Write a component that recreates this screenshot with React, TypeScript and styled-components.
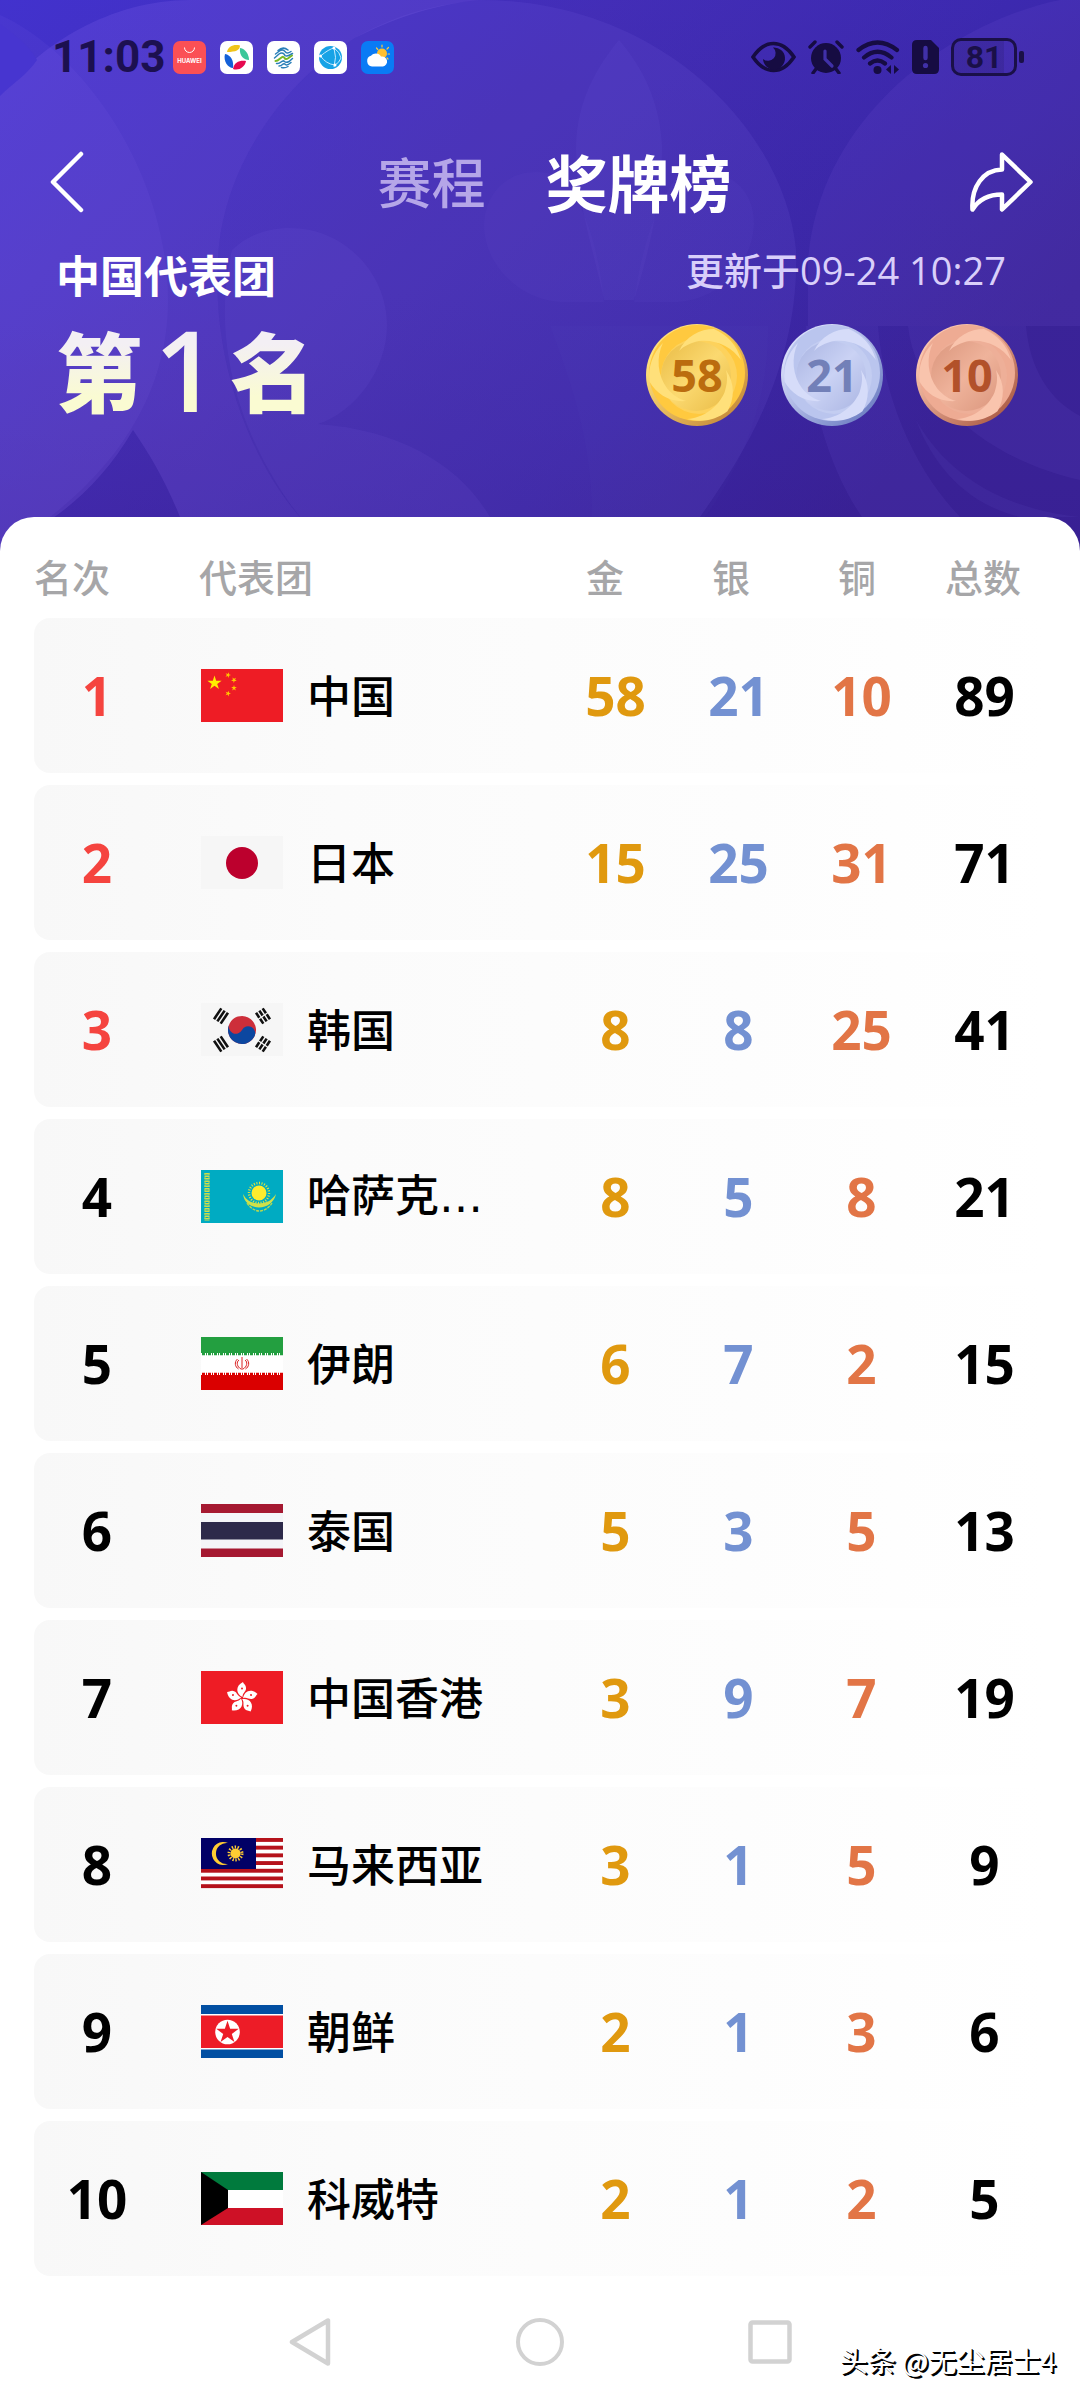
import React from "react";
import styled, { createGlobalStyle } from "styled-components";

const DIGITS = `"Open Sans", "Noto Sans CJK SC", sans-serif`;

const GlobalStyle = createGlobalStyle`
  *, *::before, *::after { box-sizing: border-box; }
  body {
    margin: 0;
    background: #fff;
    font-family: "Noto Sans CJK SC", "Noto Sans", sans-serif;
    color: #000;
  }
  button {
    border: 0;
    padding: 0;
    background: none;
    font: inherit;
    color: inherit;
    cursor: pointer;
  }
  svg { display: block; }
`;

const Page = styled.div`
  position: relative;
  min-height: 100vh;
  display: flex;
  flex-direction: column;
`;

const Backdrop = styled.svg`
  position: absolute;
  inset: 0 0 auto 0;
  width: 100%;
  height: 560px;
  z-index: -1;
`;

/* ---------- status bar ---------- */

const StatusBar = styled.div`
  display: flex;
  align-items: center;
  justify-content: space-between;
  height: 78px;
  padding: 36px 63px 0 52px;
  color: #1c1050;
`;

const StatusGroup = styled.div<{ $gap: number }>`
  display: flex;
  align-items: center;
  gap: ${(p) => p.$gap}px;
`;

const Clock = styled.span`
  font-family: Roboto, sans-serif;
  font-size: 44px;
  line-height: 42px;
  font-weight: 700;
`;

const Battery = styled.span`
  position: relative;
  display: flex;
  align-items: center;
  justify-content: center;
  width: 66px;
  height: 38px;
  border: 3px solid #1a1048;
  border-radius: 10px;
  background: linear-gradient(90deg, rgba(26, 16, 72, 0.16) 84%, transparent 84%);
  color: #1a1048;
  font-family: Roboto, sans-serif;
  font-size: 32px;
  line-height: 32px;
  font-weight: 700;

  &::after {
    content: "";
    position: absolute;
    right: -10px;
    top: 10px;
    width: 5px;
    height: 12px;
    border-radius: 2px;
    background: #1a1048;
  }
`;

/* ---------- header ---------- */

const TopBar = styled.header`
  display: flex;
  align-items: center;
  height: 104px;
  margin-top: 52px;
  padding: 0 46px 0 50px;
  color: #fff;
`;

const BackButton = styled.button`
  width: 90px;
`;

const Tabs = styled.nav`
  flex: 1;
  display: flex;
  align-items: center;
  justify-content: center;
  gap: 60px;
  padding-bottom: 3px;
`;

const Tab = styled.button<{ $active?: boolean }>`
  font-size: ${(p) => (p.$active ? 62 : 54)}px;
  line-height: 80px;
  font-weight: ${(p) => (p.$active ? 700 : 500)};
  color: ${(p) => (p.$active ? "#fff" : "#b5a6e8")};
`;

const Summary = styled.section`
  display: flex;
  justify-content: space-between;
  padding: 8px 62px 85px 56px;
  color: #fff;
`;

const TeamTitle = styled.h1`
  margin: 0;
  font-size: 44px;
  line-height: 64px;
  font-weight: 700;
`;

const Standing = styled.p`
  display: flex;
  align-items: center;
  gap: 12px;
  margin: 0;
  font-size: 86px;
  line-height: 126px;
  font-weight: 900;

  span {
    background: linear-gradient(180deg, #f3eff4 30%, #fafbd2 72%);
    background-clip: text;
    -webkit-background-clip: text;
    color: transparent;
  }
`;

const StandingNumber = styled.span`
  font-family: ${DIGITS};
  font-size: 112px;
  font-weight: 600;
`;

const SummaryRight = styled.div`
  display: flex;
  flex-direction: column;
  align-items: flex-end;
`;

const Updated = styled.p`
  margin: 0 12px 26px 0;
  font-family: ${DIGITS};
  font-size: 38px;
  line-height: 56px;
  font-weight: 500;
  color: #d9cffa;
`;

const Medals = styled.div`
  display: flex;
  gap: 33px;
`;

const MedalBox = styled.div<{ $color: string }>`
  display: grid;
  place-items: center;
  color: ${(p) => p.$color};
  font-family: ${DIGITS};
  font-size: 45px;
  line-height: 60px;
  font-weight: 700;

  > * { grid-area: 1 / 1; }
`;

/* ---------- table ---------- */

const Panel = styled.main`
  flex: 1;
  padding: 0 34px;
  border-radius: 34px 34px 0 0;
  background: #fff;
`;

const Table = styled.table`
  display: block;
`;

const Head = styled.thead`
  display: block;
`;

const HeadRow = styled.tr`
  display: grid;
  grid-template-columns: 165px 1fr repeat(4, 126px);
  align-items: center;
  height: 101px;
  padding-top: 16px;
`;

const HeadCell = styled.th<{ $center?: boolean }>`
  padding: 0;
  text-align: ${(p) => (p.$center ? "center" : "left")};
  font-size: 38px;
  line-height: 56px;
  font-weight: 500;
  color: #a6a6a8;
`;

const Body = styled.tbody`
  display: grid;
  gap: 12px;
`;

const Row = styled.tr`
  display: grid;
  grid-template-columns: 126px 1fr repeat(4, 123px);
  align-items: center;
  height: 155px;
  border-radius: 16px;
  background: linear-gradient(90deg, #f8f8f8 0%, #fbfbfb 30%, #fdfdfd 70%, #fff 100%);
`;

const NumberCell = styled.td<{ $tone: string }>`
  padding: 0;
  text-align: center;
  font-family: ${DIGITS};
  font-size: 53px;
  line-height: 76px;
  font-weight: 700;
  color: ${(p) => p.$tone};
`;

const TeamCell = styled.td`
  display: flex;
  align-items: center;
  gap: 24px;
  min-width: 0;
  padding: 0 0 0 41px;
  font-size: 44px;
  line-height: 64px;
  font-weight: 500;
  white-space: nowrap;
`;

const TeamName = styled.span`
  padding-bottom: 3px;
`;

const Ellipsis = styled.span`
  font-family: "DejaVu Sans", sans-serif;
  font-weight: 400;
`;

/* ---------- bottom ---------- */

const SystemNav = styled.nav`
  display: grid;
  grid-template-columns: repeat(3, 230px);
  justify-content: center;
  justify-items: center;
  align-items: center;
  height: 124px;
  padding-top: 8px;
  background: #fff;
`;

const Watermark = styled.p`
  position: absolute;
  right: 24px;
  bottom: 20px;
  margin: 0;
  font-size: 28px;
  line-height: 40px;
  color: #fff;
  text-shadow: 1px 1px 0 #000, 2px 2px 0 #000;
`;

/* ---------- drawings ---------- */

const star = (cx: number, cy: number, r: number, turn = 0) =>
  Array.from({ length: 10 }, (_, i) => {
    const a = ((turn - 90 + i * 36) * Math.PI) / 180;
    const d = i % 2 ? r * 0.382 : r;
    return `${(cx + d * Math.cos(a)).toFixed(2)},${(cy + d * Math.sin(a)).toFixed(2)}`;
  }).join(" ");

const HeaderArt = () => (
  <Backdrop viewBox="0 0 1080 560" preserveAspectRatio="none" aria-hidden="true">
    <defs>
      <linearGradient id="base" x1="0" y1="0" x2="1" y2="0.5">
        <stop offset="0" stopColor="#4434d2" />
        <stop offset="0.45" stopColor="#452eb4" />
        <stop offset="0.75" stopColor="#3c28aa" />
        <stop offset="1" stopColor="#3a2398" />
      </linearGradient>
      <linearGradient id="shade" x1="0" y1="0" x2="0" y2="1">
        <stop offset="0" stopColor="#3c2cc0" stopOpacity="0.25" />
        <stop offset="0.5" stopColor="#3a2398" stopOpacity="0.1" />
        <stop offset="1" stopColor="#35198a" stopOpacity="0.35" />
      </linearGradient>
    </defs>
    <rect width="1080" height="560" fill="url(#base)" />
    <rect width="1080" height="560" fill="url(#shade)" />
    <g fill="#a080ff" fillOpacity="0.15">
      <path d="M0 95C40 45 110 0 190 0H480C430 5 390 20 355 38C280 85 222 170 218 260C212 360 250 460 300 517H180C165 480 150 455 133 430C110 470 80 500 50 520L0 560Z" />
      <path d="M1080 0H1060C960 20 820 110 808 260V326H1080Z" fillOpacity="0.08" />
      <path d="M0 15C80 50 168 170 168 300C168 400 110 470 50 517L0 560Z" fillOpacity="0.07" />
      <path d="M355 38C400 12 440 4 480 0C660 0 785 130 796 250C800 370 740 460 700 517H300C250 460 212 360 218 260C222 170 280 85 355 38Z" fillOpacity="0.09" />
      <path d="M232 250C255 228 285 225 310 230C355 240 387 280 387 325C387 370 355 412 318 424C400 430 460 465 490 517H300C240 440 210 340 232 250Z" fillOpacity="0.07" />
      <path d="M619 40C590 75 576 110 576 150C576 200 596 260 604 300H634C650 250 663 190 662 145C660 105 645 70 619 40Z" fillOpacity="0.06" />
      <path d="M564 178C520 160 485 185 484 225C484 265 520 300 560 302H604C600 260 590 215 564 178Z" fillOpacity="0.04" />
      <path d="M676 178C720 160 755 185 754 225C752 265 718 300 678 302H634C640 260 650 215 676 178Z" fillOpacity="0.04" />
      <path d="M550 326H768C770 400 740 470 705 517H592C592 440 570 380 550 326Z" fillOpacity="0.02" />
      <path d="M806 326H878C884 400 915 470 960 517H862C830 470 808 400 806 326Z" fillOpacity="0.07" />
      <path d="M908 326H1026C1030 370 1050 400 1080 416V480C990 460 916 400 908 326Z" fillOpacity="0.07" />
      <path d="M916 420C950 480 1010 510 1080 517H1020C970 505 935 470 916 420Z" fillOpacity="0.06" />
    </g>
    <path d="M0 24C20 38 32 50 37 60C28 74 12 84 0 96Z" fill="#4735d0" />
  </Backdrop>
);

const MEDAL_TONES = {
  gold: { rim: "#c98f3e", edge: "#ffc93f", light: "#ffe07a", core: "#e9bb45", coreLight: "#fbd970", text: "#bb6c0e" },
  silver: { rim: "#7383c6", edge: "#bac5ee", light: "#d6dcf9", core: "#a9b4e2", coreLight: "#cad2f4", text: "#7280b8" },
  bronze: { rim: "#b0614b", edge: "#eeab93", light: "#f9c4ad", core: "#da957c", coreLight: "#efb39b", text: "#b2512a" },
};

const Medal = ({ kind, count }: { kind: keyof typeof MEDAL_TONES; count: number }) => {
  const t = MEDAL_TONES[kind];
  return (
    <MedalBox $color={t.text}>
      <svg width="102" height="102" viewBox="0 0 102 102" aria-hidden="true">
        <defs>
          <linearGradient id={`${kind}-core`} x1="0" y1="0" x2="1" y2="1">
            <stop offset="0" stopColor={t.core} />
            <stop offset="0.5" stopColor={t.coreLight} />
            <stop offset="1" stopColor={t.core} />
          </linearGradient>
          <linearGradient id={`${kind}-rim`} x1="0" y1="0" x2="1" y2="1">
            <stop offset="0.2" stopColor={t.light} />
            <stop offset="0.85" stopColor={t.rim} />
          </linearGradient>
        </defs>
        <circle cx="51" cy="51" r="51" fill={`url(#${kind}-rim)`} />
        <circle cx="51" cy="49" r="48" fill={t.edge} />
        <circle cx="53" cy="52" r="38" fill={t.coreLight} opacity="0.6" />
        <circle cx="50" cy="52" r="35" fill={`url(#${kind}-core)`} />
        {[0, 120, 240].map((turn) => (
          <path
            key={turn}
            d="M33 27C40 12 54 5 68 5C82 11 91 22 95 36C86 23 70 15 53 17C44 19 38 22 33 27Z"
            fill={t.light}
            transform={`rotate(${turn} 51 50)`}
          />
        ))}
      </svg>
      <span>{count}</span>
    </MedalBox>
  );
};

const Flag = ({ children, label }: { children: React.ReactNode; label: string }) => (
  <svg width="82" height="53" viewBox="0 0 82 53" role="img" aria-label={label}>
    {children}
  </svg>
);

const trigram = (x: number, y: number, turn: number, broken: boolean) => (
  <g transform={`translate(${x} ${y}) rotate(${turn})`} stroke="#111" strokeWidth="2.6">
    <path d="M-6.5 -4H6.5M-6.5 0H6.5M-6.5 4H6.5" strokeDasharray={broken ? "5.8 1.4" : undefined} />
  </g>
);

const FLAGS: Record<string, React.ReactNode> = {
  china: (
    <>
      <rect width="82" height="53" fill="#ee1c25" />
      <polygon points={star(13.5, 14, 7.5)} fill="#ffed00" />
      <polygon points={star(27, 6, 3, 20)} fill="#ffc800" />
      <polygon points={star(33, 11, 3, 40)} fill="#ffc800" />
      <polygon points={star(33, 19, 3)} fill="#ffc800" />
      <polygon points={star(27, 24.5, 3, 20)} fill="#ffc800" />
    </>
  ),
  japan: (
    <>
      <rect width="82" height="53" fill="#f6f6f6" />
      <circle cx="41" cy="27" r="16" fill="#bc002d" />
    </>
  ),
  korea: (
    <>
      <rect width="82" height="53" fill="#f6f6f6" />
      <g transform="rotate(28 41 27)">
        <circle cx="41" cy="27" r="14" fill="#cd2e3a" />
        <path d="M27 27a14 14 0 0 0 28 0a7 7 0 0 0 -14 0a7 7 0 0 1 -14 0Z" fill="#0c47a0" />
      </g>
      {trigram(20, 13, -56, false)}
      {trigram(62, 13, 56, true)}
      {trigram(20, 41, 56, false)}
      {trigram(62, 41, -56, true)}
    </>
  ),
  kazakhstan: (
    <>
      <rect width="82" height="53" fill="#00abc2" />
      <path d="M6 3V51" stroke="#cfe04a" strokeWidth="5" strokeDasharray="1.5 1" />
      <path d="M4 3V51M8 3V51" stroke="#b5d850" strokeWidth="1" strokeDasharray="2 2" />
      <circle cx="58" cy="23" r="7.5" fill="#ffec2d" />
      <circle cx="58" cy="23" r="10" fill="none" stroke="#e5e83c" strokeWidth="2.4" strokeDasharray="1 1.6" />
      <path d="M42 24C43 33 50 37 58 37.500C66 37 73 33 75 24C70 31 66 33 58 33.500C50 33 46 31 42 24Z" fill="#cfe04a" />
      <path d="M46 33C50 39 55 41 58 41C63 41 68 38 71 33" fill="none" stroke="#b5d850" strokeWidth="1.4" strokeDasharray="3 1" />
    </>
  ),
  iran: (
    <>
      <rect width="82" height="53" fill="#fff" />
      <rect width="82" height="16" fill="#239f40" />
      <rect y="38" width="82" height="15" fill="#da0000" />
      <path d="M1 17H82" stroke="#239f40" strokeWidth="2.400" strokeDasharray="3 1 1 1" />
      <path d="M1 37H82" stroke="#da0000" strokeWidth="2.400" strokeDasharray="3 1 1 1" />
      <g fill="none" stroke="#da2020" strokeWidth="1">
        <path d="M41 20V33M38 23C35 25 36 30 40 32M44 23C47 25 46 30 42 32" />
        <path d="M36.500 22C33 25 34 30 37.500 32M45.500 22C49 25 48 30 44.500 32" />
      </g>
    </>
  ),
  thailand: (
    <>
      <rect width="82" height="53" fill="#f4f5f8" />
      <rect width="82" height="9" fill="#a51931" />
      <rect y="18" width="82" height="17.500" fill="#2d2a4a" />
      <rect y="44.500" width="82" height="8.500" fill="#a51931" />
    </>
  ),
  hongkong: (
    <>
      <rect width="82" height="53" fill="#ee1c25" />
      {[0, 72, 144, 216, 288].map((turn) => (
        <g key={turn} transform={`rotate(${turn} 41 27)`}>
          <path d="M41.500 26C35 23 34 15 42 11C42.500 13 45.500 14 45 18C44.500 21 41.500 22 41.500 26Z" fill="#fff" />
          <circle cx="41" cy="17.500" r="1" fill="#ee1c25" />
        </g>
      ))}
    </>
  ),
  malaysia: (
    <>
      <rect width="82" height="50" fill="#fff" />
      {[0, 1, 2, 3, 4, 5, 6].map((i) => (
        <rect key={i} y={i * 7.7} width="82" height="3.900" fill="#b5121b" />
      ))}
      <rect width="55" height="31" fill="#010066" />
      <path d="M27 5A11.500 11.500 0 1 0 27 26A10.600 10.600 0 1 1 27 5Z" fill="#fc3" />
      <circle cx="34.500" cy="15.500" r="5" fill="#fc3" />
      <circle cx="34.500" cy="15.500" r="6.500" fill="none" stroke="#fc3" strokeWidth="3" strokeDasharray="1.400 1.500" />
    </>
  ),
  dprk: (
    <>
      <rect width="82" height="53" fill="#fff" />
      <rect width="82" height="9" fill="#024fa2" />
      <rect y="10.500" width="82" height="32.500" fill="#ed1c27" />
      <rect y="44.500" width="82" height="8.500" fill="#024fa2" />
      <circle cx="26.500" cy="27" r="12.300" fill="#fff" />
      <polygon points={star(26.5, 27.5, 11.8)} fill="#ed1c27" />
    </>
  ),
  kuwait: (
    <>
      <rect width="82" height="53" fill="#fff" />
      <rect width="82" height="18" fill="#007a3d" />
      <rect y="36" width="82" height="17" fill="#ce1126" />
      <path d="M0 0L27 18V36L0 53Z" fill="#000" />
    </>
  ),
};

const AppIcon = ({ color, children }: { color: string; children: React.ReactNode }) => (
  <svg width="33" height="33" viewBox="0 0 33 33" aria-hidden="true">
    <rect width="33" height="33" rx="7" fill={color} />
    {children}
  </svg>
);

const Notifications = () => (
  <StatusGroup $gap={14}>
    <AppIcon color="#fb5055">
      <path d="M11.500 6.500A5 5 0 0 0 21.500 6.500" fill="none" stroke="#fff" strokeWidth="1" />
      <text x="16.500" y="21.500" textAnchor="middle" fontSize="6" fontWeight="700" fontFamily="Inter" fill="#fff">
        HUAWEI
      </text>
    </AppIcon>
    <AppIcon color="#fff">
      <path d="M7 11C8 5 14 3 20 4.500C20 9 16 11 7 11Z" fill="#f0c419" />
      <path d="M20 7C26 8 29 14 29 19C24 19 19 15 20 7Z" fill="#3cc79a" />
      <path d="M13 28C14 21 20 19 26 20C25 26 19 30 13 28Z" fill="#e60a50" />
      <path d="M5 13C11 14 14 20 13 27C8 27 3 20 5 13Z" fill="#1460d8" />
    </AppIcon>
    <AppIcon color="#fff">
      <g fill="none" strokeWidth="1.500" strokeLinecap="round">
        <path d="M11 9.500Q16 5 21 9M8.500 13L12.500 10Q15.500 8 17.500 10L19 11.500Q20.500 13 24 10.500M7.500 17L12 13Q15 11 17 13L18 14.500Q20 16 25.500 12.500" stroke="#2a7fb8" />
        <path d="M8.500 20Q10.500 20 12.500 18L14.500 16.500Q16.500 15 17.500 17T21.500 17L25 14.500" stroke="#78b928" strokeWidth="2" />
        <path d="M9.500 22.500Q12 23 14 21Q16 19 17.500 20.500T22 20.500L25.500 17.500M12 25Q14 25 15.500 23.500T18.500 23.500T24 21.500M14.500 26.500Q18 27.500 21 25.500" stroke="#2a7fb8" />
      </g>
    </AppIcon>
    <AppIcon color="#fff">
      <circle cx="16.500" cy="16.500" r="11.500" fill="#17a3e6" />
      <g fill="none" stroke="#c5eaff" strokeWidth="1">
        <path d="M6.500 15Q15 8 20 7Q23 16 20 26M6.500 15Q12 23 21 24M20 7Q26 11 27 17M21 24Q25 22 27 17" />
      </g>
      <circle cx="20" cy="7" r="1.500" fill="#fff" />
      <circle cx="21" cy="24" r="1.500" fill="#fff" />
      <circle cx="6.500" cy="15" r="1.500" fill="#fff" />
    </AppIcon>
    <AppIcon color="#0a7bf5">
      <g stroke="#ffc93c" strokeWidth="1.200" strokeLinecap="round">
        <path d="M21 4V6M15.500 7L16.800 8.500M27.500 6.500L26 8M28.500 13H27M27 18L26 17" />
      </g>
      <circle cx="21" cy="12.500" r="5" fill="#ffbf2e" />
      <path d="M11 25.500A5.500 5.500 0 0 1 10 14.800A6 6 0 0 1 20 15.500A5 5 0 0 1 22 25.500Z" fill="#fff" />
    </AppIcon>
  </StatusGroup>
);

const StatusIcons = () => (
  <StatusGroup $gap={12}>
    <svg width="45" height="34" viewBox="0 0 45 34" aria-hidden="true">
      <path d="M2 17C8 8 14 3.500 22.500 3.500S37 8 43 17C37 26 31 30.500 22.500 30.500S8 26 2 17Z" fill="none" stroke="#160c42" strokeWidth="3.600" />
      <path d="M22 7.500A11 11 0 1 1 12 19A6 6 0 1 0 22 7.500Z" fill="#160c42" />
    </svg>
    <svg width="36" height="34" viewBox="0 0 36 34" aria-hidden="true">
      <circle cx="18" cy="18" r="15" fill="#160c42" />
      <path d="M2 7L7 2M34 7L29 2M8 29L5 33M28 29L31 33" stroke="#160c42" strokeWidth="3.400" strokeLinecap="round" />
      <path d="M17 11V19L24 26" fill="none" stroke="#4030a8" strokeWidth="3.200" strokeLinecap="round" />
    </svg>
    <svg width="44" height="34" viewBox="0 0 44 34" aria-hidden="true">
      <g fill="none" stroke="#160c42" strokeWidth="4.200" strokeLinecap="round">
        <path d="M2.500 10Q21.500 -5 41 10M8 17.500Q21.500 6 35.500 17.500M14 23.500Q21.500 17.500 29 23.500" />
      </g>
      <circle cx="21.500" cy="30" r="4" fill="#160c42" />
      <path d="M35 25V34L30 29.500ZM38 25V34L43 29.500Z" fill="#160c42" />
    </svg>
    <svg width="27" height="34" viewBox="0 0 27 34" aria-hidden="true">
      <path d="M5 0H19L27 8V29Q27 34 22 34H5Q0 34 0 29V5Q0 0 5 0Z" fill="#160c42" />
      <path d="M13.500 8V18" stroke="#4030a8" strokeWidth="4.400" strokeLinecap="round" />
      <circle cx="13.500" cy="25.500" r="2.600" fill="#4030a8" />
    </svg>
    <Battery>81</Battery>
  </StatusGroup>
);

/* ---------- data ---------- */

type Team = {
  rank: number;
  name: string;
  cut?: boolean;
  flag: string;
  gold: number;
  silver: number;
  bronze: number;
  total: number;
};

const TEAMS: Team[] = [
  { rank: 1, name: "中国", flag: "china", gold: 58, silver: 21, bronze: 10, total: 89 },
  { rank: 2, name: "日本", flag: "japan", gold: 15, silver: 25, bronze: 31, total: 71 },
  { rank: 3, name: "韩国", flag: "korea", gold: 8, silver: 8, bronze: 25, total: 41 },
  { rank: 4, name: "哈萨克", cut: true, flag: "kazakhstan", gold: 8, silver: 5, bronze: 8, total: 21 },
  { rank: 5, name: "伊朗", flag: "iran", gold: 6, silver: 7, bronze: 2, total: 15 },
  { rank: 6, name: "泰国", flag: "thailand", gold: 5, silver: 3, bronze: 5, total: 13 },
  { rank: 7, name: "中国香港", flag: "hongkong", gold: 3, silver: 9, bronze: 7, total: 19 },
  { rank: 8, name: "马来西亚", flag: "malaysia", gold: 3, silver: 1, bronze: 5, total: 9 },
  { rank: 9, name: "朝鲜", flag: "dprk", gold: 2, silver: 1, bronze: 3, total: 6 },
  { rank: 10, name: "科威特", flag: "kuwait", gold: 2, silver: 1, bronze: 2, total: 5 },
];

export default function App() {
  return (
    <Page>
      <GlobalStyle />
      <HeaderArt />
      <StatusBar>
        <StatusGroup $gap={8}>
          <Clock>11:03</Clock>
          <Notifications />
        </StatusGroup>
        <StatusIcons />
      </StatusBar>

      <TopBar>
        <BackButton aria-label="返回">
          <svg width="34" height="62" viewBox="0 0 34 62" fill="none" stroke="#fff" strokeWidth="4.500" strokeLinecap="round" strokeLinejoin="round">
            <path d="M31 3L3 31L31 59" />
          </svg>
        </BackButton>
        <Tabs>
          <Tab>赛程</Tab>
          <Tab $active aria-current="page">奖牌榜</Tab>
        </Tabs>
        <button aria-label="分享">
          <svg width="65" height="62" viewBox="0 0 65 62" fill="none" stroke="#fff" strokeWidth="4.500" strokeLinejoin="round">
            <path d="M33 3.500L61.500 31L33 58.500V43.500C20 43.500 10 48 3.500 58.500C2 36 14 19 33 18.500Z" />
          </svg>
        </button>
      </TopBar>

      <Summary>
        <div>
          <TeamTitle>中国代表团</TeamTitle>
          <Standing>
            <span>第</span>
            <StandingNumber>1</StandingNumber>
            <span>名</span>
          </Standing>
        </div>
        <SummaryRight>
          <Updated>更新于09-24 10:27</Updated>
          <Medals>
            <Medal kind="gold" count={58} />
            <Medal kind="silver" count={21} />
            <Medal kind="bronze" count={10} />
          </Medals>
        </SummaryRight>
      </Summary>

      <Panel>
        <Table>
          <Head>
            <HeadRow>
              <HeadCell scope="col">名次</HeadCell>
              <HeadCell scope="col">代表团</HeadCell>
              <HeadCell scope="col" $center>金</HeadCell>
              <HeadCell scope="col" $center>银</HeadCell>
              <HeadCell scope="col" $center>铜</HeadCell>
              <HeadCell scope="col" $center>总数</HeadCell>
            </HeadRow>
          </Head>
          <Body>
            {TEAMS.map((t) => (
              <Row key={t.rank}>
                <NumberCell $tone={t.rank <= 3 ? "#f5443f" : "#000"}>{t.rank}</NumberCell>
                <TeamCell>
                  <Flag label={t.name}>{FLAGS[t.flag]}</Flag>
                  <TeamName>
                    {t.name}
                    {t.cut && <Ellipsis>…</Ellipsis>}
                  </TeamName>
                </TeamCell>
                <NumberCell $tone="#e0990f">{t.gold}</NumberCell>
                <NumberCell $tone="#7391d2">{t.silver}</NumberCell>
                <NumberCell $tone="#e27546">{t.bronze}</NumberCell>
                <NumberCell $tone="#000">{t.total}</NumberCell>
              </Row>
            ))}
          </Body>
        </Table>
      </Panel>

      <SystemNav aria-label="系统导航">
        <button aria-label="后退">
          <svg width="42" height="50" viewBox="0 0 42 50" fill="none" stroke="#d2d2d2" strokeWidth="4.500" strokeLinejoin="round">
            <path d="M39 3.500V46.500L3 25Z" />
          </svg>
        </button>
        <button aria-label="主屏幕">
          <svg width="50" height="50" viewBox="0 0 50 50" fill="none" stroke="#d2d2d2" strokeWidth="4">
            <circle cx="25" cy="25" r="22" />
          </svg>
        </button>
        <button aria-label="最近任务">
          <svg width="44" height="44" viewBox="0 0 44 44" fill="none" stroke="#d2d2d2" strokeWidth="4.500">
            <rect x="2.500" y="2.500" width="39" height="39" rx="2" />
          </svg>
        </button>
      </SystemNav>

      <Watermark>头条 @无尘居士4</Watermark>
    </Page>
  );
}
